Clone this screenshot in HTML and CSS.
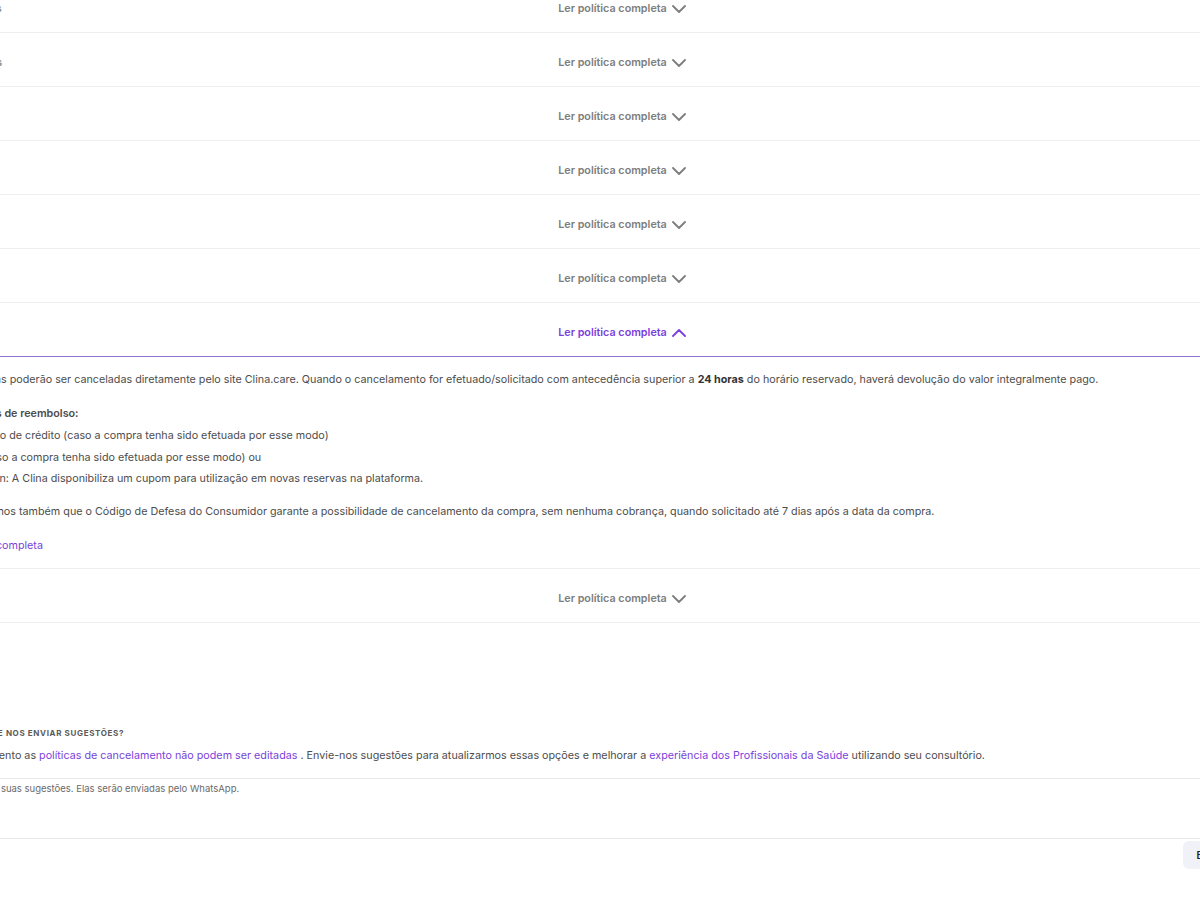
FILE: index.html
```html
<!DOCTYPE html>
<html lang="pt-BR">
<head>
    <meta charset="UTF-8">
    <meta name="viewport" content="width=device-width, initial-scale=1.0">
    <title>Políticas de cancelamento</title>
    <link rel="stylesheet" href="styles.css">
</head>
<body>
    <div class="page">
        <section class="policies">
            <div class="policy">
                <div class="policy-head">
                    <span class="policy-name">24 horas</span>
                    <button class="toggle">Ler política completa
                        <svg class="chevron" width="14" height="8" viewBox="0 0 14 8"><polyline points="1,1 7,7 13,1"/></svg>
                    </button>
                </div>
            </div>
            <div class="policy">
                <div class="policy-head">
                    <span class="policy-name">48 horas</span>
                    <button class="toggle">Ler política completa
                        <svg class="chevron" width="14" height="8" viewBox="0 0 14 8"><polyline points="1,1 7,7 13,1"/></svg>
                    </button>
                </div>
            </div>
            <div class="policy">
                <div class="policy-head">
                    <span class="policy-name">Livre</span>
                    <button class="toggle">Ler política completa
                        <svg class="chevron" width="14" height="8" viewBox="0 0 14 8"><polyline points="1,1 7,7 13,1"/></svg>
                    </button>
                </div>
            </div>
            <div class="policy">
                <div class="policy-head">
                    <span class="policy-name">Rígida</span>
                    <button class="toggle">Ler política completa
                        <svg class="chevron" width="14" height="8" viewBox="0 0 14 8"><polyline points="1,1 7,7 13,1"/></svg>
                    </button>
                </div>
            </div>
            <div class="policy">
                <div class="policy-head">
                    <span class="policy-name">Padrão</span>
                    <button class="toggle">Ler política completa
                        <svg class="chevron" width="14" height="8" viewBox="0 0 14 8"><polyline points="1,1 7,7 13,1"/></svg>
                    </button>
                </div>
            </div>
            <div class="policy">
                <div class="policy-head">
                    <span class="policy-name">Única</span>
                    <button class="toggle">Ler política completa
                        <svg class="chevron" width="14" height="8" viewBox="0 0 14 8"><polyline points="1,1 7,7 13,1"/></svg>
                    </button>
                </div>
            </div>
            <div class="policy open">
                <div class="policy-head">
                    <span class="policy-name">Clina</span>
                    <button class="toggle">Ler política completa
                        <svg class="chevron" width="14" height="8" viewBox="0 0 14 8"><polyline points="1,7 7,1 13,7"/></svg>
                    </button>
                </div>
                <div class="policy-body">
                    <p>Consultas poderão ser canceladas diretamente pelo site Clina.care. Quando o cancelamento for efetuado/solicitado com antecedência superior a <strong>24 horas</strong> do horário reservado, haverá devolução do valor integralmente pago.</p>
                    <p class="body-title">Métodos de reembolso:</p>
                    <ul>
                        <li>No cartão de crédito (caso a compra tenha sido efetuada por esse modo)</li>
                        <li>TED (caso a compra tenha sido efetuada por esse modo) ou</li>
                        <li>E-coupon: A Clina disponibiliza um cupom para utilização em novas reservas na plataforma.</li>
                    </ul>
                    <p>Lembramos também que o Código de Defesa do Consumidor garante a possibilidade de cancelamento da compra, sem nenhuma cobrança, quando solicitado até 7 dias após a data da compra.</p>
                    <a class="body-link" href="#">Política completa</a>
                </div>
            </div>
            <div class="policy">
                <div class="policy-head">
                    <span class="policy-name">Sem</span>
                    <button class="toggle">Ler política completa
                        <svg class="chevron" width="14" height="8" viewBox="0 0 14 8"><polyline points="1,1 7,7 13,1"/></svg>
                    </button>
                </div>
            </div>
        </section>

        <section class="suggest">
            <h4>Pretende nos enviar sugestões?</h4>
            <p>No momento as <a href="#">políticas de cancelamento não podem ser editadas</a> . Envie-nos sugestões para atualizarmos essas opções e melhorar a <a href="#">experiência dos Profissionais da Saúde</a> utilizando seu consultório.</p>
            <textarea class="suggest-box" placeholder="Descreva suas sugestões. Elas serão enviadas pelo WhatsApp."></textarea>
            <div class="suggest-actions">
                <button class="send">Enviar sugestão</button>
            </div>
        </section>
    </div>
</body>
</html>
```

FILE: styles.css
```css
html, body {
    overflow: hidden;
}
body {
    margin: 0;
    font-family: Inter, "Noto Sans", sans-serif;
    font-size: 10.75px;
    color: #4d4d4d;
    background: #fff;
}
.page {
    width: 1332px;
    margin: -21px 0 0 -44px;
}
.policy {
    border-bottom: 1px solid #efefef;
}
.policy-head {
    display: grid;
    grid-template-columns: 1fr auto 1fr;
    align-items: center;
    padding: 21px 0 14px;
    line-height: 18px;
}
.policy.open .policy-head {
    border-bottom: 1px solid #9270cf;
}
.policy-name {
    font-weight: 600;
    color: #8a8a8a;
}
.toggle {
    display: flex;
    align-items: center;
    gap: 5px;
    padding: 0;
    border: 0;
    background: none;
    font: inherit;
    font-weight: 600;
    color: #7d7d7d;
    cursor: pointer;
}
.chevron {
    fill: none;
    stroke: #7d7d7d;
    stroke-width: 1.8;
    stroke-linecap: round;
    stroke-linejoin: round;
}
.policy.open .toggle {
    color: #7a3fdc;
}
.policy.open .chevron {
    stroke: #7a3fdc;
}
.policy-body {
    padding: 14px 0 13px;
    line-height: 18px;
}
.policy-body p {
    margin: 0 0 16px;
}
.policy-body .body-title {
    margin-bottom: 4px;
    font-weight: 600;
}
.policy-body strong {
    font-weight: 700;
    color: #333;
}
.policy-body ul {
    margin: 0 0 15px;
    padding: 0;
    list-style: none;
}
.policy-body li {
    margin-bottom: 3.5px;
}
.body-link {
    color: #7a3fdc;
    text-decoration: none;
}

.suggest {
    padding-top: 105px;
}
.suggest h4 {
    margin: 0 0 9px;
    font-size: 8px;
    font-weight: 700;
    letter-spacing: 0.08em;
    text-transform: uppercase;
    color: #5a5a5a;
}
.suggest p {
    margin: 0 0 13px;
    line-height: 18px;
}
.suggest a {
    color: #7a3fdc;
    text-decoration: none;
}
.suggest-box {
    display: block;
    box-sizing: border-box;
    width: 100%;
    height: 61px;
    margin: 0;
    padding: 4px 0;
    border: 0;
    border-top: 1px solid #e8e8e8;
    border-bottom: 1px solid #e8e8e8;
    resize: none;
    font-family: Inter, "Noto Sans", sans-serif;
    font-size: 9.5px;
    color: #555;
}
.suggest-box::placeholder {
    color: #6b6b6b;
}
.suggest-actions {
    display: flex;
    justify-content: flex-end;
    padding-top: 2px;
}
.send {
    height: 28px;
    padding: 0 14px;
    border: 0;
    border-radius: 6px;
    background: #f1f2f7;
    font-family: Inter, "Noto Sans", sans-serif;
    font-size: 10px;
    font-weight: 600;
    color: #222;
}
```
